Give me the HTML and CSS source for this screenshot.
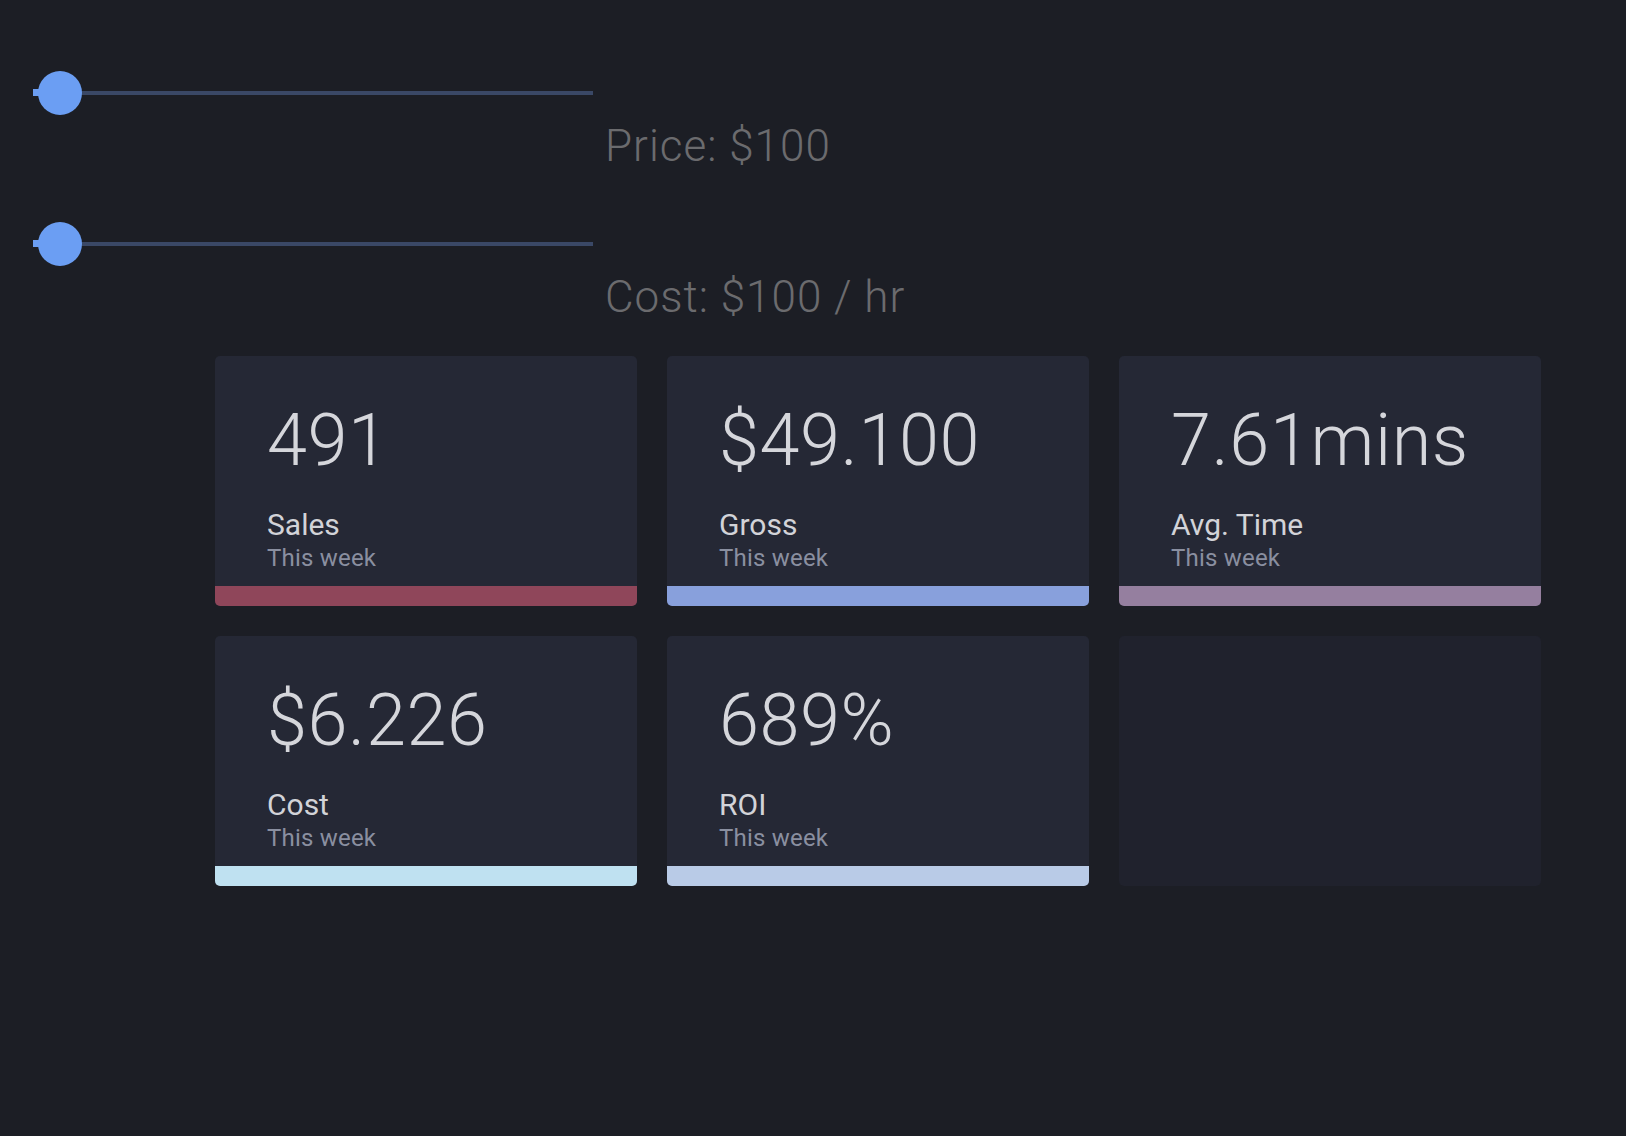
FILE: index.html
```html
<!DOCTYPE html>
<html lang="en">
<head>
<meta charset="utf-8">
<title>Dashboard</title>
<link rel="stylesheet" href="styles.css">
</head>
<body>
  <div class="controls">
    <div class="control">
      <div class="slider">
        <div class="track"></div>
        <div class="fill"></div>
        <div class="thumb"></div>
      </div>
      <div class="control-label">Price: $100</div>
    </div>
    <div class="control">
      <div class="slider">
        <div class="track"></div>
        <div class="fill"></div>
        <div class="thumb"></div>
      </div>
      <div class="control-label">Cost: $100 / hr</div>
    </div>
  </div>

  <div class="grid">
    <div class="card">
      <div class="card-body">
        <div class="value">491</div>
        <div class="label">Sales</div>
        <div class="sub">This week</div>
      </div>
      <div class="bar bar-rose"></div>
    </div>
    <div class="card">
      <div class="card-body">
        <div class="value">$49.100</div>
        <div class="label">Gross</div>
        <div class="sub">This week</div>
      </div>
      <div class="bar bar-blue"></div>
    </div>
    <div class="card">
      <div class="card-body">
        <div class="value">7.61mins</div>
        <div class="label">Avg. Time</div>
        <div class="sub">This week</div>
      </div>
      <div class="bar bar-mauve"></div>
    </div>
    <div class="card">
      <div class="card-body">
        <div class="value">$6.226</div>
        <div class="label">Cost</div>
        <div class="sub">This week</div>
      </div>
      <div class="bar bar-sky"></div>
    </div>
    <div class="card">
      <div class="card-body">
        <div class="value">689%</div>
        <div class="label">ROI</div>
        <div class="sub">This week</div>
      </div>
      <div class="bar bar-periwinkle"></div>
    </div>
    <div class="card card-empty"></div>
  </div>
</body>
</html>
```

FILE: styles.css
```css
html, body {
  margin: 0;
  background: #1c1e25;
}

body {
  padding-top: 71px;
  font-family: Roboto, "Liberation Sans", Arial, sans-serif;
  min-height: 1136px;
  box-sizing: border-box;
}

.controls {
  padding-left: 33px;
  display: flex;
  flex-direction: column;
  gap: 51px;
}

.control {
  display: flex;
  align-items: flex-start;
  height: 100px;
}

.slider {
  position: relative;
  width: 560px;
  height: 44px;
  display: flex;
  align-items: center;
  flex: none;
}

.track {
  width: 100%;
  height: 4px;
  background: #3a4866;
}

.fill {
  position: absolute;
  left: 0;
  top: 18px;
  width: 8px;
  height: 7px;
  background: #6b9ef3;
}

.thumb {
  position: absolute;
  left: 5px;
  top: 0;
  width: 44px;
  height: 44px;
  border-radius: 50%;
  background: #6b9ef3;
}

.control-label {
  margin-left: 12px;
  margin-top: 49px;
  font-size: 44px;
  line-height: 52px;
  font-weight: 300;
  letter-spacing: 1px;
  color: #6b6b6e;
  white-space: nowrap;
}

.grid {
  margin-top: 34px;
  margin-left: 215px;
  display: grid;
  grid-template-columns: repeat(3, 422px);
  grid-auto-rows: 250px;
  gap: 30px;
}

.card {
  display: flex;
  flex-direction: column;
  background: #252835;
  border-radius: 5px;
  overflow: hidden;
}

.card-empty {
  background: #20222d;
}

.card-body {
  padding: 45px 52px 0;
}

.value {
  font-size: 72px;
  line-height: 80px;
  font-weight: 300;
  letter-spacing: 0.6px;
  color: #d5d6db;
  white-space: nowrap;
}

.label {
  margin-top: 26px;
  font-size: 30px;
  line-height: 36px;
  color: #d2d3d8;
}

.sub {
  margin-top: 1px;
  font-size: 24px;
  line-height: 28px;
  letter-spacing: 0.2px;
  color: #8a8fa0;
}

.bar {
  margin-top: auto;
  height: 20px;
}

.bar-rose { background: #8f465a; }
.bar-blue { background: #88a0dc; }
.bar-mauve { background: #957f9f; }
.bar-sky { background: #bfe1f1; }
.bar-periwinkle { background: #b9cbe7; }
```
